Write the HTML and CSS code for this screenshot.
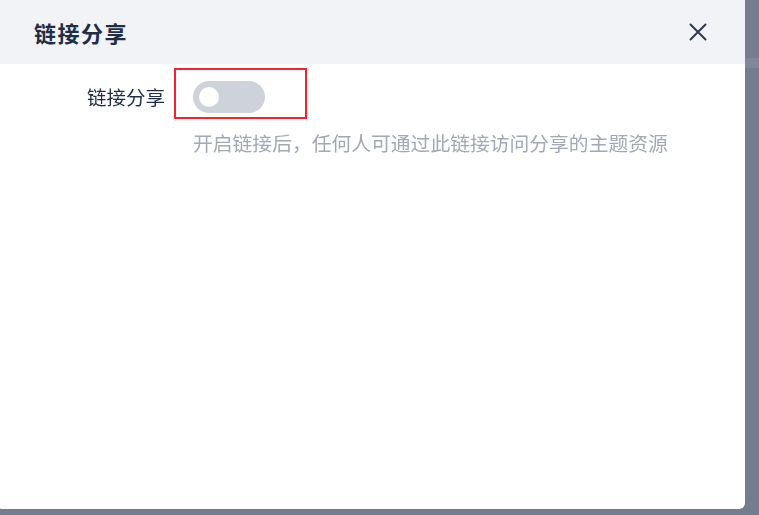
FILE: index.html
```html
<!DOCTYPE html>
<html lang="zh-CN">
<head>
    <meta charset="UTF-8">
    <meta name="viewport" content="width=device-width, initial-scale=1.0">
    <title>链接分享</title>
    <link rel="stylesheet" href="styles.css">
</head>
<body>
    <div class="page-strip"></div>
    <div class="mask">
        <div class="dialog">
            <div class="dialog-header">
                <h3 class="dialog-title">链接分享</h3>
                <button class="dialog-close" title="关闭">
                    <svg width="18" height="18" viewBox="0 0 18 18">
                        <path d="M1.5 1.5 L16.5 16.5 M16.5 1.5 L1.5 16.5" stroke="#2c3a55" stroke-width="2" stroke-linecap="round" fill="none"/>
                    </svg>
                </button>
            </div>

            <div class="dialog-body">
                <div class="form-row">
                    <label class="form-label">链接分享</label>
                    <div class="form-control">
                        <div class="switch-highlight">
                            <span class="switch"><span class="switch-knob"></span></span>
                        </div>
                    </div>
                </div>
                <p class="form-tip">开启链接后，任何人可通过此链接访问分享的主题资源</p>
            </div>
        </div>
    </div>
</body>
</html>
```

FILE: styles.css
```css
body {
    margin: 0;
    background-color: #aab1bf;
    font-family: "Noto Sans CJK SC", "Noto Sans", sans-serif;
    overflow: hidden;
}

.page-strip { /* underlying page element seen through the mask */
    height: 10px;
    margin-top: 58px;
    background-color: #c6cbd4;
}

.mask {
    position: fixed;
    top: 0;
    left: 0;
    right: 0;
    bottom: 0;
    background-color: rgba(80, 90, 112, 0.6);
}

.dialog {
    position: absolute;
    top: -8px;
    left: -4px;
    width: 749px;
    height: 517px;
    background-color: #fff;
    border-radius: 6px;
    overflow: hidden;
    display: flex;
    flex-direction: column;
}

.dialog-header {
    height: 72px;
    box-sizing: border-box;
    padding: 8px 38px 0 38px;
    background-color: #f2f3f7;
    display: flex;
    align-items: center;
    justify-content: space-between;
}

.dialog-title {
    margin: 0;
    font-size: 22px;
    font-weight: bold;
    color: #1f2d48;
    letter-spacing: 1.5px;
}

.dialog-close {
    border: none;
    background: none;
    padding: 0;
    width: 18px;
    height: 18px;
    cursor: pointer;
}

.dialog-body {
    padding: 4px 0 0 0;
}

.form-row {
    display: flex;
    align-items: flex-start;
}

.form-label {
    width: 170px;
    margin-top: 15px;
    line-height: 28px;
    text-align: right;
    font-size: 19.5px;
    color: #1f2d48;
    box-sizing: border-box;
    padding-right: 1px;
}

.form-control {
    margin-left: 8px;
}

.switch-highlight {
    width: 112px;
    height: 36px;
    border: 2.5px solid #f5222d;
    display: flex;
    align-items: flex-start;
    padding: 10.5px 0 0 16.5px;
    box-sizing: content-box;
}

.switch {
    width: 72px;
    height: 32px;
    border-radius: 16px;
    background-color: #ced2da;
    display: flex;
    align-items: center;
    padding-left: 6px;
    box-sizing: border-box;
}

.switch-knob {
    width: 20px;
    height: 20px;
    border-radius: 50%;
    background-color: #fff;
}

.form-tip {
    margin: 9px 0 0 197px;
    font-size: 19.8px;
    color: #a2a8b4;
}
```
